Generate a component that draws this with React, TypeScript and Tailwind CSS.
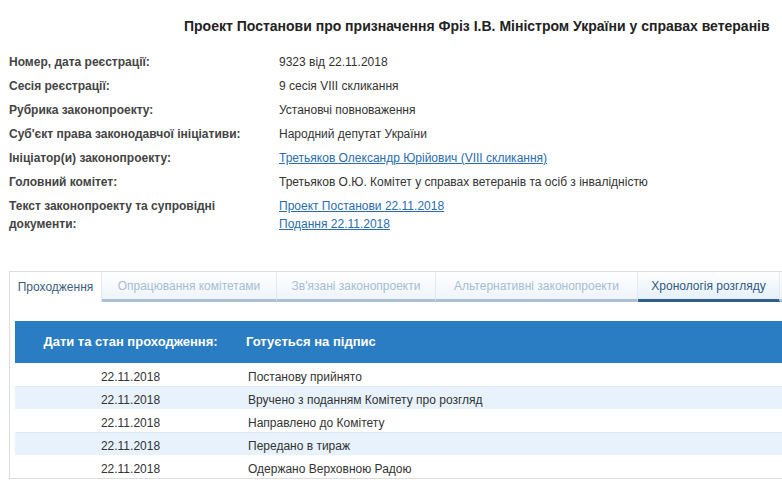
import React from 'react';

const info = [
  { label: 'Номер, дата реєстрації:', value: '9323 від 22.11.2018' },
  { label: 'Сесія реєстрації:', value: '9 сесія VIII скликання' },
  { label: 'Рубрика законопроекту:', value: 'Установчі повноваження' },
  { label: "Суб'єкт права законодавчої ініціативи:", value: 'Народний депутат України' },
  { label: 'Ініціатор(и) законопроекту:', links: ['Третьяков Олександр Юрійович (VIII скликання)'] },
  { label: 'Головний комітет:', value: 'Третьяков О.Ю. Комітет у справах ветеранів та осіб з інвалідністю' },
  { label: 'Текст законопроекту та супровідні документи:', links: ['Проект Постанови 22.11.2018', 'Подання 22.11.2018'] },
];

const tabs = [
  { name: 'Проходження', w: 'w-[92px]', state: 'active' },
  { name: 'Опрацювання комітетами', w: 'w-[175px]', state: 'idle' },
  { name: "Зв'язані законопроекти", w: 'w-[159px]', state: 'idle' },
  { name: 'Альтернативні законопроекти', w: 'w-[202px]', state: 'idle' },
  { name: 'Хронологія розгляду', w: 'w-[142px]', state: 'hot' },
];

const events = [
  'Постанову прийнято',
  'Вручено з поданням Комітету про розгляд',
  'Направлено до Комітету',
  'Передано в тираж',
  'Одержано Верховною Радою',
];

export default function App() {
  return (
    <div className="w-[782px] h-[485px] overflow-hidden bg-white font-['Liberation_Sans',Arial,sans-serif]">
      <div className="w-[940px] pl-[9px]">
        {/* Title */}
        <div className="pt-[16px] pl-[175px] text-[14px] leading-[20px] font-bold text-[#222]">
          Проект Постанови про призначення Фріз І.В. Міністром України у справах ветеранів
        </div>

        {/* Info rows */}
        <div className="mt-[14px] text-[12px] leading-[18px]">
          {info.map((row, i) => (
            <div key={i} className="flex py-[3px]">
              <div className="w-[270px] pr-[20px] font-bold text-[#444]">{row.label}</div>
              <div className="flex flex-col text-[#333]">
                {row.value && <span>{row.value}</span>}
                {row.links?.map((l) => (
                  <a key={l} href="#" className="text-[#2a6cae] underline w-fit">{l}</a>
                ))}
              </div>
            </div>
          ))}
        </div>

        {/* Tabs panel */}
        <div className="mt-[35px] border border-[#dddddd]">
          <div className="flex h-[30px] text-[12px]">
            {tabs.map((t) => (
              <div
                key={t.name}
                className={`${t.w} flex items-center justify-center border-r border-[#e3e9ef] ${
                  t.state === 'active'
                    ? 'bg-white text-[#3d5d7c]'
                    : t.state === 'hot'
                    ? 'bg-gradient-to-b from-white to-[#e6eff8] text-[#2d5a86] border-b-[3px] border-b-[#2f5f8a]'
                    : 'bg-gradient-to-b from-white to-[#eef4fa] text-[#a7bdd1] border-b-[3px] border-b-[#adc0d3]'
                }`}
              >
                {t.name}
              </div>
            ))}
            <div className="flex-1 border-b-[3px] border-b-[#adc0d3] bg-gradient-to-b from-white to-[#eef4fa]"></div>
          </div>

          <div className="pl-[5px] pt-[19px]">
            <div className="flex h-[42px] items-center bg-[#2a7cc3] text-white text-[13px] font-bold">
              <div className="w-[231px] text-center">Дати та стан проходження:</div>
              <div>Готується на підпис</div>
            </div>
            {events.map((e, i) => (
              <div
                key={e}
                className={`flex h-[23px] items-center pt-[4px] text-[12px] text-[#333] ${
                  i % 2 === 1 ? 'bg-[#e8f2fc] border-t border-[#dfe9f4]' : 'bg-white'
                }`}
              >
                <div className="w-[231px] text-center">22.11.2018</div>
                <div className="pl-[2px]">{e}</div>
              </div>
            ))}
          </div>
        </div>
      </div>
    </div>
  );
}
